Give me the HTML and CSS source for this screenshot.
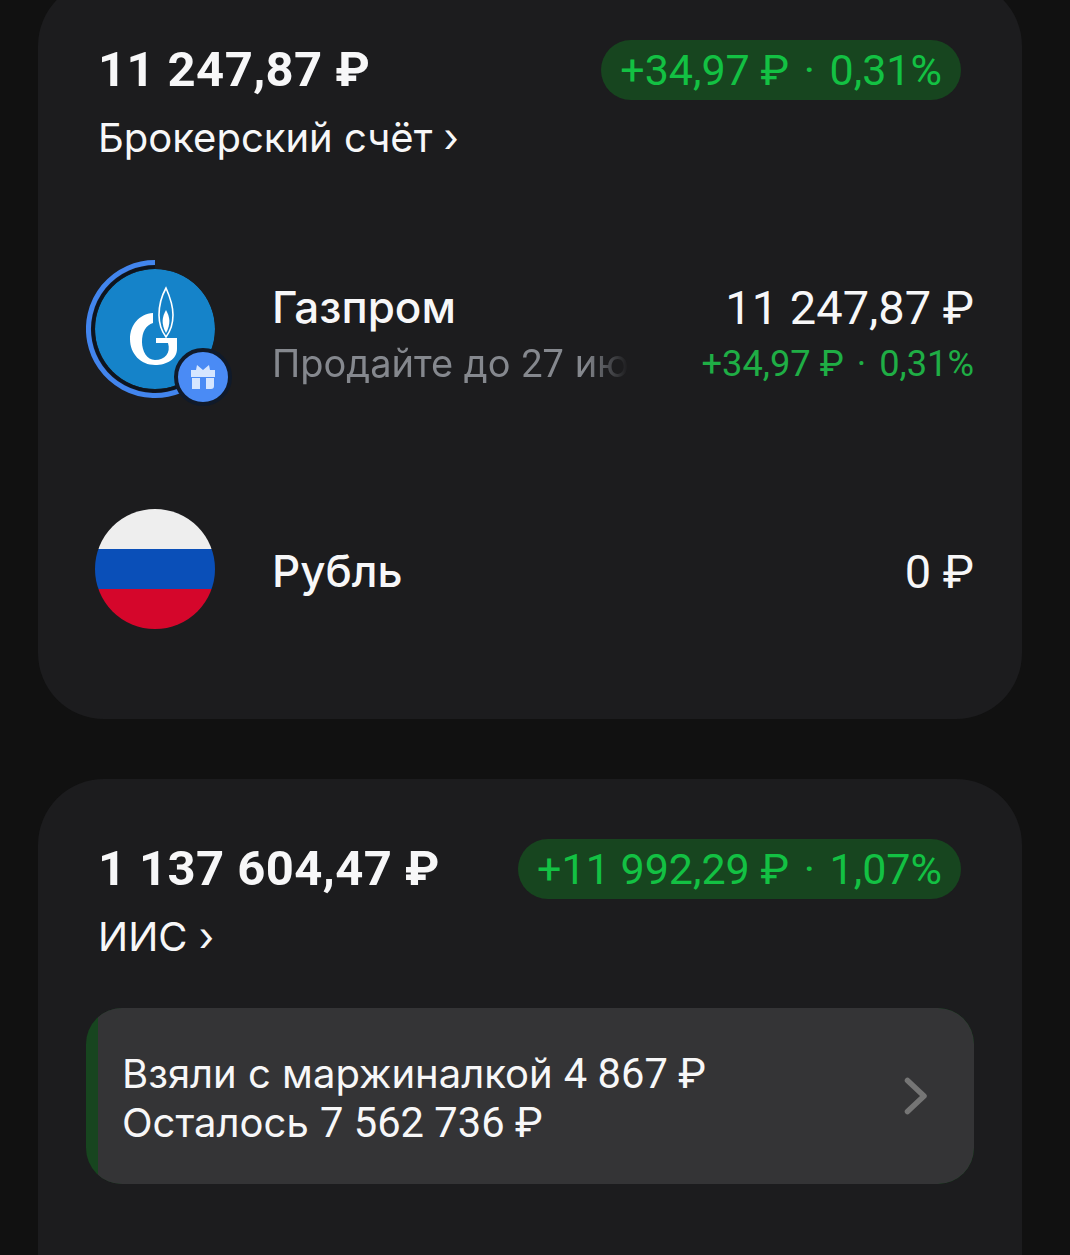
FILE: index.html
```html
<!DOCTYPE html>
<html lang="ru">
<head>
    <meta charset="UTF-8">
    <meta name="viewport" content="width=device-width, initial-scale=1.0">
    <title>Счета</title>
    <link rel="stylesheet" href="styles.css">
</head>
<body>
    <div class="page">
        <section class="card">
            <div class="head">
                <div class="head-top">
                    <div class="total">11 247,87 ₽</div>
                    <div class="pill">+34,97 ₽ <span class="dot">·</span> 0,31%</div>
                </div>
                <div class="account">Брокерский счёт ›</div>
            </div>

            <div class="row">
                <div class="avatar">
                    <svg class="ring" viewBox="0 0 138 138">
                        <path d="M69 7 A62 62 0 1 0 92 126.6" fill="none" stroke="#0c1420" stroke-width="3"/>
                        <path d="M69 2.5 A66.5 66.5 0 1 0 94 130.6" fill="none" stroke="#4285ee" stroke-width="5"/>
                    </svg>
                    <svg class="logo" viewBox="0 0 120 120">
                        <circle cx="60" cy="60" r="60" fill="#1583c9"/>
                        <path d="M58 44 C44 45 35 56 35 70 C35 85 46 96 60 96 C72 96 82 90 82 80 V69 H61 V74 H73 C76 84 70 91 60 91 C52 91 47 82 47 73 C47 63 51 56 58 54 Z" fill="#fff"/>
                        <path d="M71 19 C66 28 64 38 64 46 C64 56 68 64 71 68 C74 64 78 56 78 46 C78 38 75 28 71 19 Z" fill="none" stroke="#fff" stroke-width="1.6"/>
                        <path d="M71 41 C67 48 66 55 71 64 C76 55 75 48 71 41 Z" fill="#fff"/>
                    </svg>
                    <div class="badge">
                        <svg viewBox="0 0 26 26" width="26" height="26">
                            <path d="M1 6 H25 V13 H1 Z M2 14 H10 V25 H2 Z M16 14 H24 V22 Q24 25 21 25 H16 Z" fill="#d6e6ff"/>
                            <path d="M13 6 L7 1 L6 6 Z M13 6 L19 1 L20 6 Z" fill="#d6e6ff"/>
                        </svg>
                    </div>
                </div>
                <div class="info">
                    <div class="name">Газпром</div>
                    <div class="note">Продайте до <span class="num">27</span> ию</div>
                </div>
                <div class="amount">
                    <div class="sum">11 247,87 ₽</div>
                    <div class="gain">+34,97 ₽ <span class="dot">·</span> 0,31%</div>
                </div>
            </div>

            <div class="row">
                <div class="avatar">
                    <div class="flag"></div>
                </div>
                <div class="info">
                    <div class="name">Рубль</div>
                </div>
                <div class="amount">
                    <div class="sum">0 ₽</div>
                </div>
            </div>
        </section>

        <section class="card card-last">
            <div class="head">
                <div class="head-top">
                    <div class="total">1 137 604,47 ₽</div>
                    <div class="pill">+11 992,29 ₽ <span class="dot">·</span> 1,07%</div>
                </div>
                <div class="account">ИИС ›</div>
            </div>

            <div class="margin-box">
                <div class="margin-inner">
                    <div class="margin-text">
                        Взяли с маржиналкой <span class="num">4 867 ₽</span><br>
                        Осталось <span class="num">7 562 736 ₽</span>
                    </div>
                    <svg class="chevron" viewBox="0 0 24 38" width="24" height="38">
                        <path d="M3.5 3.5 L20 19 L3.5 34.5" fill="none" stroke="#757575" stroke-width="5.5" stroke-linecap="round" stroke-linejoin="round"/>
                    </svg>
                </div>
            </div>
        </section>
    </div>
</body>
</html>
```

FILE: styles.css
```css
html, body {
    margin: 0;
    height: 1255px;
    overflow: hidden;
    background: #111111;
}

body {
    font-family: 'Inter', 'Roboto', sans-serif;
    color: #f7f7f8;
}

.num, .total, .pill, .sum, .gain {
    font-family: 'Roboto', 'Inter', sans-serif;
}

.page {
    display: flex;
    flex-direction: column;
    gap: 60px;
    height: 1275px;
    margin: -20px 48px 0 38px;
}

.card {
    background: #1c1c1e;
    border-radius: 66px;
    padding: 60px 48px 30px;
}

.card-last {
    flex: 1;
    border-radius: 66px 66px 0 0;
    padding-bottom: 0;
}

.head {
    height: 169px;
}

.head-top {
    display: flex;
    justify-content: space-between;
    align-items: center;
    height: 60px;
    padding: 0 13px 0 12px;
}

.total {
    padding-bottom: 2px;
    font-size: 49px;
    font-weight: 700;
    letter-spacing: 0.4px;
}

.pill {
    height: 60px;
    line-height: 60px;
    padding: 0 19px;
    border-radius: 30px;
    background: #17451f;
    color: #13c143;
    font-size: 43px;
}

.dot {
    margin: 0 4px;
}

.account {
    margin-top: 8px;
    padding-left: 12px;
    height: 60px;
    line-height: 60px;
    font-size: 40px;
}

.row {
    display: flex;
    align-items: center;
    height: 240px;
}

.avatar {
    position: relative;
    flex: none;
    display: flex;
    align-items: center;
    justify-content: center;
    width: 138px;
    height: 138px;
    margin-right: 48px;
}

.ring {
    position: absolute;
    top: 0;
    left: 0;
    width: 138px;
    height: 138px;
}

.logo {
    position: relative;
    width: 120px;
    height: 120px;
    border-radius: 50%;
}

.badge {
    position: absolute;
    left: 88px;
    top: 88px;
    display: flex;
    align-items: center;
    justify-content: center;
    width: 50px;
    height: 50px;
    border-radius: 50%;
    background: #4a8bf5;
    border: 4px solid #101a2a;
}

.flag {
    width: 120px;
    height: 120px;
    border-radius: 50%;
    background: linear-gradient(#eeeeee 0 33.4%, #0a4fb8 33.4% 66.7%, #d5062b 66.7%);
}

.info {
    flex: 1;
    min-width: 0;
    padding-top: 4px;
}

.name {
    font-size: 44px;
    font-weight: 500;
    line-height: 56px;
}

.note {
    width: 356px;
    margin-bottom: -8px;
    font-size: 38px;
    line-height: 56px;
    white-space: nowrap;
    overflow: hidden;
    color: #85888e;
    -webkit-mask-image: linear-gradient(to right, #000 88%, transparent);
    mask-image: linear-gradient(to right, #000 88%, transparent);
}

.amount {
    padding-top: 6px;
    text-align: right;
}

.sum {
    font-size: 47px;
    line-height: 56px;
}

.gain {
    margin-bottom: -8px;
    font-size: 36.25px;
    line-height: 56px;
    color: #1fae45;
}

.margin-box {
    height: 176px;
    border-radius: 36px;
    background: #17451f;
    padding-left: 12px;
    overflow: hidden;
}

.margin-inner {
    display: flex;
    align-items: center;
    justify-content: space-between;
    height: 100%;
    padding: 0 46px 0 24px;
    background: #343436;
    border-radius: 0 36px 36px 0;
}

.margin-text {
    padding-top: 4px;
    font-size: 40px;
    line-height: 49px;
}

.margin-text .num {
    font-size: 41.7px;
}

.chevron {
    flex: none;
}
```
